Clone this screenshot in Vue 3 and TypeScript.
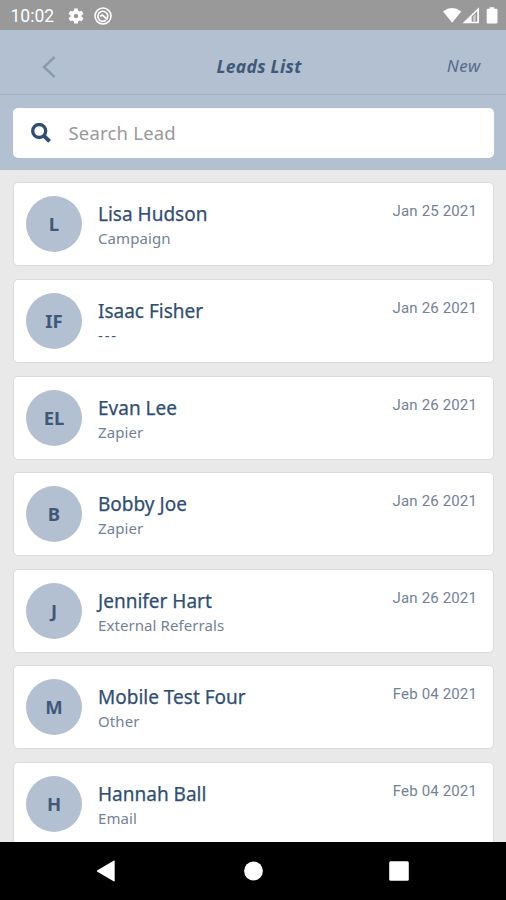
<script setup lang="ts">
interface Lead {
  initials: string
  name: string
  source: string
  date: string
}

const leads: Lead[] = [
  { initials: 'L', name: 'Lisa Hudson', source: 'Campaign', date: 'Jan 25 2021' },
  { initials: 'IF', name: 'Isaac Fisher', source: '---', date: 'Jan 26 2021' },
  { initials: 'EL', name: 'Evan Lee', source: 'Zapier', date: 'Jan 26 2021' },
  { initials: 'B', name: 'Bobby Joe', source: 'Zapier', date: 'Jan 26 2021' },
  { initials: 'J', name: 'Jennifer Hart', source: 'External Referrals', date: 'Jan 26 2021' },
  { initials: 'M', name: 'Mobile Test Four', source: 'Other', date: 'Feb 04 2021' },
  { initials: 'H', name: 'Hannah Ball', source: 'Email', date: 'Feb 04 2021' },
]
</script>

<template>
  <div class="screen">
    <div class="status">
      <span class="clock">10:02</span>
      <svg class="gear" viewBox="0 0 24 24"><path fill="#fff" fill-rule="evenodd" d="M19.4 13c.1-.3.1-.7.1-1s0-.7-.1-1l2.2-1.7c.2-.2.2-.4.1-.7l-2-3.4c-.1-.3-.4-.4-.6-.3l-2.6 1a8 8 0 0 0-1.7-1l-.4-2.6A.5.5 0 0 0 14 2h-4a.5.5 0 0 0-.5.4l-.4 2.600a8 8 0 0 0-1.7 1l-2.5-1c-.2-.1-.5 0-.6.3l-2 3.400c-.1.3-.1.5.1.7L4.600 11a8 8 0 0 0 0 2l-2.200 1.700c-.2.2-.2.4-.1.7l2 3.400c.1.3.4.4.6.3l2.500-1a8 8 0 0 0 1.700 1l.4 2.600c0 .2.2.4.5.4h4c.3 0 .5-.2.5-.4l.4-2.600a8 8 0 0 0 1.700-1l2.600 1c.2.1.5 0 .6-.3l2-3.400c.1-.3.1-.5-.1-.7zM12 15a3 3 0 1 1 0-6 3 3 0 0 1 0 6z" /></svg>
      <svg class="debug" viewBox="0 0 18 18" fill="none" stroke="#fff"><circle cx="9" cy="9" r="8" stroke-width="1.6" /><path d="M12 13.2A5 5 0 1 1 13.8 8.600c0 1.700-.4 2.800-1.300 3.800" stroke-width="1.6" /><path d="M6 9.200l2.400-1.200 4.800 4.400" stroke-width="1.700" /></svg>
      <svg class="signals" viewBox="0 0 56 18" fill="#fff">
        <path d="M0 4.4Q9 -2.4 18.2 4.400L9.200 15.700z" />
        <path fill-rule="evenodd" d="M19.5 16.300L36 .2v16.100zM28.600 14.800v-5.300l5.700-5.600v10.900z" />
        <path d="M30 9.500l2.600-2.600v7.900h-2.600z" opacity=".5" />
        <path d="M46.600 1.700V.3h4.600v1.400h2.300q1 0 1 1v12.800q0 1-1 1h-8.800q-1 0-1-1V2.700q0-1 1-1z" />
      </svg>
    </div>

    <header class="header">
      <svg class="back" viewBox="0 0 14 22"><path d="M12.600 1L2 11l10.600 10" fill="none" stroke="#899bb0" stroke-width="2.5" /></svg>
      <h1 class="title">Leads List</h1>
      <span class="new">New</span>
    </header>

    <div class="search-area">
      <div class="search">
        <svg class="glass" viewBox="0 0 20 20" fill="none" stroke="#304e73"><circle cx="8.2" cy="8" r="6.5" stroke-width="3.3" /><path d="M13 12.800l5.600 5.600" stroke-width="4" /></svg>
        <span class="placeholder">Search Lead</span>
      </div>
    </div>

    <main class="list">
      <article v-for="lead in leads" :key="lead.name" class="card">
        <div class="avatar">{{ lead.initials }}</div>
        <div class="info">
          <div class="name">{{ lead.name }}</div>
          <div class="source" :class="{ empty: lead.source === '---' }">{{ lead.source }}</div>
        </div>
        <time class="date">{{ lead.date }}</time>
      </article>
    </main>

    <nav class="nav">
      <svg class="nav-icon" viewBox="0 0 22 22"><path d="M1.4 10.200L18 .6q.7-.3.7.4v20q0 .7-.7.4L1.400 11.800q-1.200-.8 0-1.600z" fill="#fff" /></svg>
      <svg class="nav-icon" viewBox="0 0 22 22"><circle cx="11.5" cy="11" r="9.4" fill="#fff" /></svg>
      <svg class="nav-icon" viewBox="0 0 22 22"><rect x="1.2" y="1.3" width="19.6" height="19.4" rx="1.5" fill="#fff" /></svg>
    </nav>
  </div>
</template>

<style>
body {
  margin: 0;
}
</style>

<style scoped>
.screen {
  display: flex;
  flex-direction: column;
  width: 506px;
  height: 900px;
  overflow: hidden;
  background: #e9e9e9;
  font-family: "Noto Sans", sans-serif;
  color: #304e73;
}
.status {
  flex: none;
  display: flex;
  align-items: center;
  box-sizing: border-box;
  height: 30px;
  padding: 1px 8px 0 10.5px;
  background: #999;
  color: #fff;
}
.clock {
  width: 56.5px;
  font: 17.5px/28px Roboto, sans-serif;
}
.gear {
  width: 18px;
  height: 18px;
}
.debug {
  width: 18px;
  height: 18px;
  margin-left: 9px;
}
.signals {
  width: 56px;
  height: 18px;
  margin: 0 -1px 0 auto;
}
.header {
  flex: none;
  display: grid;
  grid-template-columns: 100px 1fr 100px;
  align-items: center;
  box-sizing: border-box;
  height: 65px;
  padding: 8px 25px 0 25px;
  border-bottom: 1px solid #a6b6c8;
  background: #b2c0d1;
}
.back {
  width: 14px;
  height: 22px;
  margin: 1px 0 0 17px;
}
.title {
  margin: 0 0 0 12px;
  text-align: center;
  font-size: 17.5px;
  line-height: 24px;
  letter-spacing: 0.3px;
  font-weight: 700;
  font-style: italic;
  color: #405878;
}
.new {
  text-align: right;
  font-size: 17px;
  line-height: 24px;
  letter-spacing: 0.6px;
  font-style: italic;
  color: #566c8a;
}
.search-area {
  flex: none;
  box-sizing: border-box;
  height: 75px;
  padding: 12.5px 12px 0 12.5px;
  background: #b2c0d1;
}
.search {
  display: flex;
  align-items: center;
  height: 50px;
  padding-left: 18px;
  border-radius: 5px;
  background: #fff;
}
.glass {
  width: 20px;
  height: 20px;
}
.placeholder {
  margin-left: 18px;
  font-size: 18.5px;
  line-height: 26px;
  letter-spacing: 0.2px;
  color: #999;
}
.list {
  flex: 1;
  min-height: 0;
  display: flex;
  flex-direction: column;
  gap: 12.6px;
  padding: 12.4px 12px 0 13px;
  overflow: hidden;
}
.card {
  flex: none;
  display: flex;
  box-sizing: border-box;
  height: 84px;
  padding: 13px 16px 0 12px;
  border: 1px solid #d9dbdd;
  border-radius: 5px;
  background: #fff;
}
.avatar {
  width: 56px;
  height: 56px;
  border-radius: 50%;
  background: #b2c0d1;
  text-align: center;
  font-size: 18.5px;
  line-height: 55px;
  font-weight: 700;
  color: #405878;
}
.info {
  flex: 1;
  margin-left: 16px;
  white-space: nowrap;
}
.name {
  margin-top: 5px;
  font-size: 19px;
  line-height: 27px;
  -webkit-text-stroke: 0.25px #304e73;
}
.source {
  margin-top: -1px;
  font-size: 15px;
  line-height: 22px;
  letter-spacing: 0.08px;
  color: #73819a;
}
.source.empty {
  letter-spacing: 1.8px;
  color: #405878;
}
.date {
  margin-top: 4px;
  font-family: Roboto, sans-serif;
  font-size: 15px;
  line-height: 22px;
  letter-spacing: 0.15px;
  color: #73819a;
}
.nav {
  flex: none;
  display: flex;
  justify-content: space-between;
  align-items: center;
  box-sizing: border-box;
  height: 58px;
  padding: 0 96px;
  background: #000;
}
.nav-icon {
  width: 22px;
  height: 22px;
}
</style>
